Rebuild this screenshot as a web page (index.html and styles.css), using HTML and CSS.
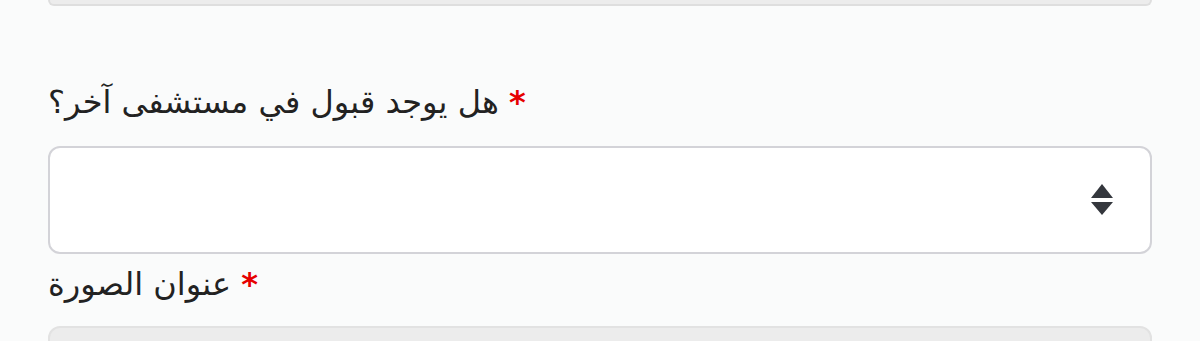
FILE: index.html
```html
<!DOCTYPE html>
<html>
<head>
  <title>Form</title>
  <link rel="stylesheet" href="styles.css">
</head>
<body>
  <div class="form">
    <div class="field-tail"></div>

    <div class="group">
      <label class="field-label">هل يوجد قبول في مستشفى آخر؟ <span class="req">*</span></label>
      <div class="select-box">
        <svg class="select-arrows" width="24" height="34" viewBox="0 0 24 34">
          <path d="M12 1 L23 15 L1 15 Z" fill="#34373d"/>
          <path d="M1 19 L23 19 L12 32 Z" fill="#34373d"/>
        </svg>
      </div>
    </div>

    <label class="field-label second">عنوان الصورة <span class="req">*</span></label>
    <div class="field-disabled"></div>
  </div>
</body>
</html>
```

FILE: styles.css
```css
body {
  margin: 0;
  background: #fafbfb;
  font-family: "DejaVu Sans", "Noto Sans", sans-serif;
  color: #222;
  overflow: hidden;
}
.form {
  padding: 0 48px;
}
.field-tail {
  height: 4px;
  background: #ececec;
  border: 2px solid #dedede;
  border-top: none;
  border-radius: 0 0 12px 12px;
}
.group {
  margin-top: 72px;
}
.field-label {
  display: block;
  font-size: 32px;
  line-height: 48px;
  margin-bottom: 20px;
}
.field-label.second {
  margin-top: 6px;
  margin-bottom: 18px;
}
.req {
  color: #e60000;
  font-weight: bold;
}
.select-box {
  height: 104px;
  background: #fff;
  border: 2px solid #d3d3d8;
  border-radius: 12px;
  display: flex;
  align-items: center;
  justify-content: flex-end;
  padding-right: 36px;
}
.field-disabled {
  height: 60px;
  background: #ececec;
  border: 2px solid #e2e2e2;
  border-radius: 12px;
}
```
